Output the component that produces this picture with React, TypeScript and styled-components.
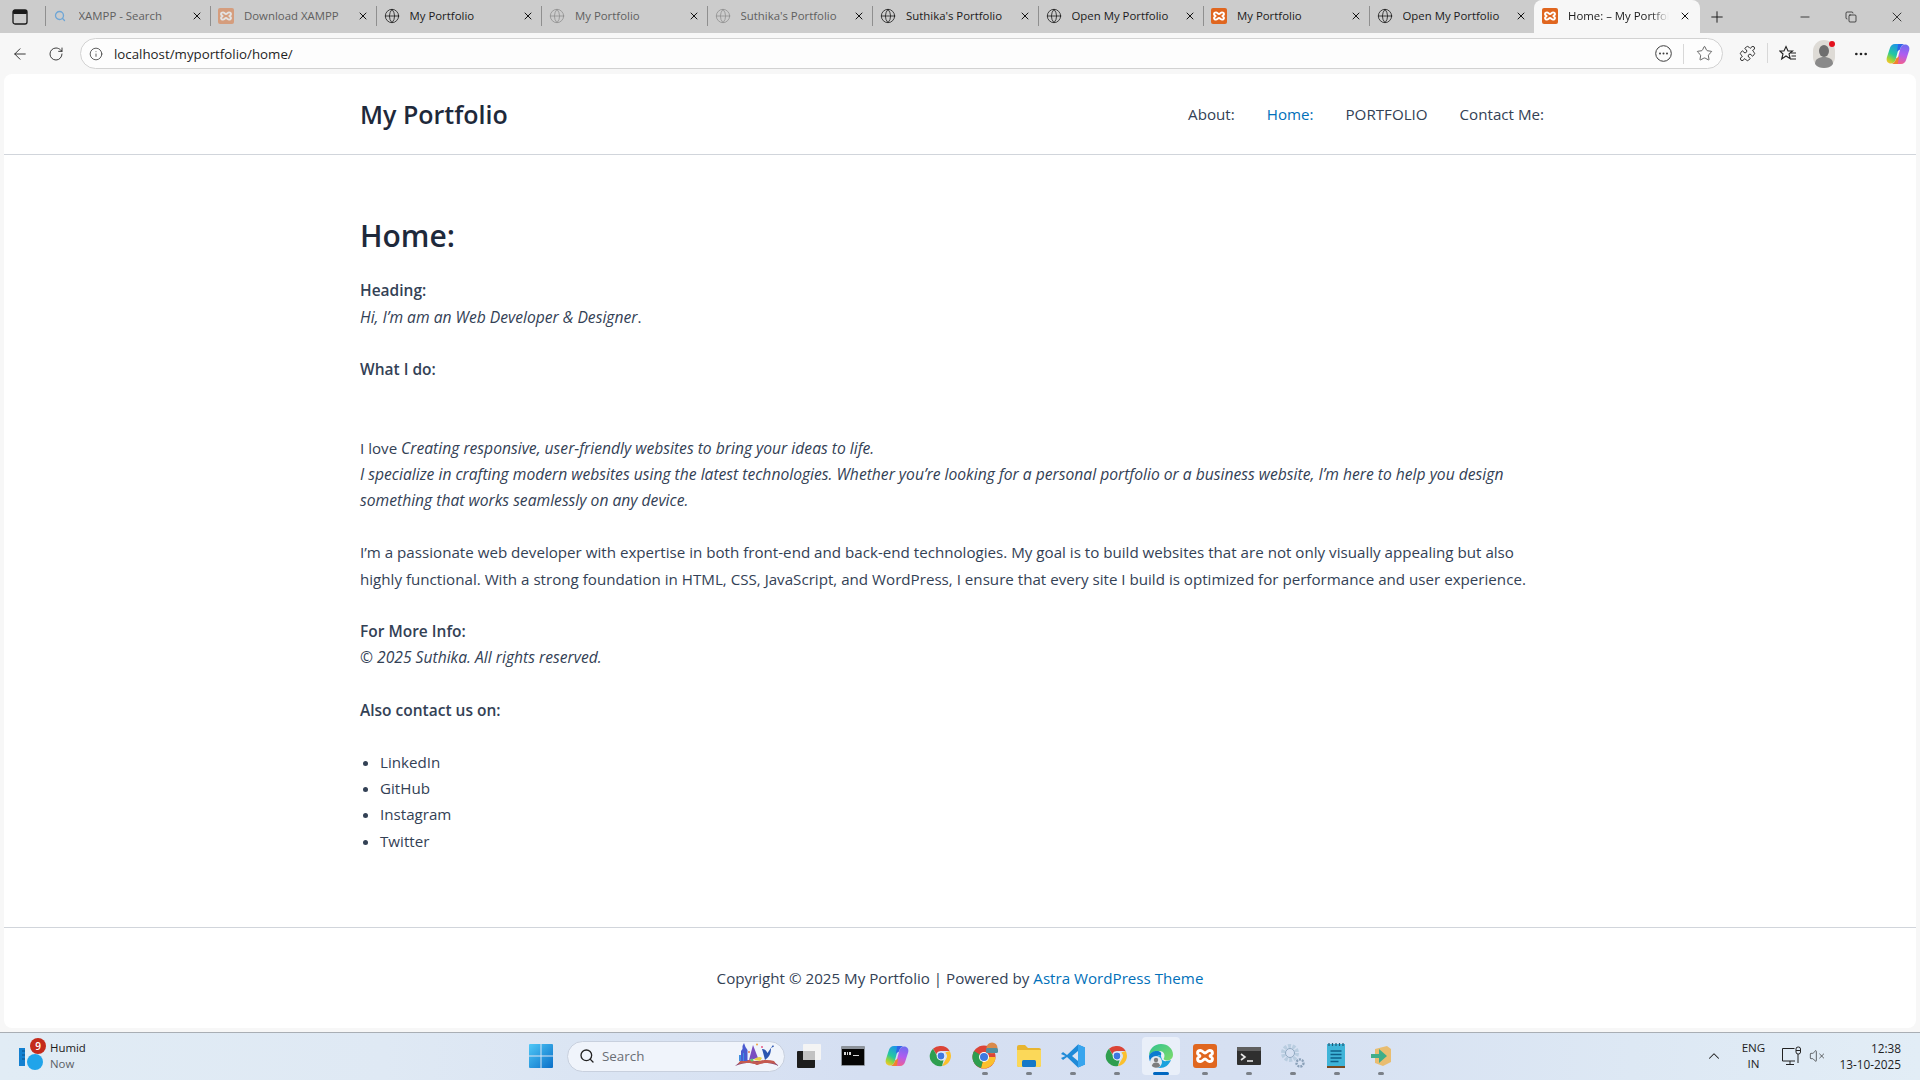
import React from 'react'
import styled, { createGlobalStyle } from 'styled-components'
import {
  ArrowLeft,
  ChevronUp,
  Copy,
  Ellipsis,
  Globe,
  Info,
  Minus,
  Plus,
  Puzzle,
  RotateCw,
  Search,
  Star,
  VolumeX,
  X
} from 'lucide-react'

const UI_FONT = '"Open Sans", "Noto Sans", sans-serif'

const GlobalStyle = createGlobalStyle`
  html, body {
    margin: 0;
    padding: 0;
    width: 1920px;
    height: 1080px;
    overflow: hidden;
    background: #f7f7f7;
    font-family: ${UI_FONT};
  }
  * {
    box-sizing: border-box;
  }
`

const Screen = styled.div`
  width: 1920px;
  height: 1080px;
  display: flex;
  flex-direction: column;
  background: #f7f7f7;
`

const TabStrip = styled.div`
  height: 33px;
  flex: none;
  display: flex;
  background: #cccccc;
`

const PanelButton = styled.div`
  width: 44.5px;
  flex: none;
  display: flex;
  align-items: center;
  justify-content: center;
  padding-right: 4px;
  color: #1a1a1a;
`

const Tab = styled.div<{ $active?: boolean; $dim?: boolean }>`
  width: ${({ $active }) => ($active ? '166px' : '165.5px')};
  flex: none;
  display: flex;
  align-items: center;
  padding: 0 ${({ $active }) => ($active ? '9px' : '7px')} 2px 0;
  gap: 10px;
  font-size: 11.4px;
  white-space: nowrap;
  color: ${({ $dim }) => ($dim ? '#5f5f5f' : '#1b1b1b')};
  background: ${({ $active }) => ($active ? '#f7f7f7' : 'transparent')};
  border-radius: ${({ $active }) => ($active ? '8px 8px 0 0' : '0')};
  &::before {
    content: '';
    flex: none;
    width: 1px;
    height: 20px;
    margin-right: -3px;
    background: ${({ $active }) => ($active ? 'transparent' : '#8f8f8f')};
  }
`

const TabTitle = styled.span<{ $fade?: boolean }>`
  flex: 1;
  overflow: hidden;
  mask-image: ${({ $fade }) => ($fade ? 'linear-gradient(90deg, #000 82%, transparent)' : 'none')};
`

const TabClose = styled.span`
  display: flex;
  width: 12px;
  flex: none;
  color: #111111;
`

const NewTab = styled.div`
  width: 34px;
  flex: none;
  display: flex;
  align-items: center;
  justify-content: center;
  color: #1b1b1b;
`

const WindowControls = styled.div`
  margin-left: auto;
  display: flex;
`

const WindowButton = styled.div`
  width: 46px;
  display: flex;
  align-items: center;
  justify-content: center;
  color: #111111;
`

const Toolbar = styled.div`
  height: 41px;
  flex: none;
  display: flex;
  align-items: flex-start;
  padding: 5px 0 0 2px;
  color: #222222;
`

const ToolButton = styled.div<{ $w?: number }>`
  width: ${({ $w }) => $w ?? 36}px;
  height: 31px;
  flex: none;
  display: flex;
  align-items: center;
  justify-content: center;
`

const AddressBar = styled.div`
  width: 1643px;
  height: 31px;
  margin-left: 6px;
  margin-right: 6px;
  flex: none;
  display: flex;
  align-items: center;
  padding: 0 6px 0 8px;
  background: #fdfdfd;
  border: 1px solid #d2d2d2;
  border-radius: 16px;
`

const Url = styled.span`
  margin-left: 11px;
  flex: 1;
  font-size: 13.3px;
  color: #1f1f1f;
`

const AddressIcon = styled.div`
  width: 24px;
  display: flex;
  justify-content: center;
  color: #3c3c3c;
`

const ToolDivider = styled.div<{ $gap: number }>`
  width: 1px;
  height: 20px;
  margin: 5px ${({ $gap }) => $gap}px 0;
  background: #d8d8d8;
  flex: none;
`

const InlineDivider = styled.div`
  width: 1px;
  height: 20px;
  margin: 0 8px;
  background: #d8d8d8;
  flex: none;
`

const Page = styled.main`
  flex: 1;
  min-height: 0;
  margin: 0 4px 4px;
  display: flex;
  flex-direction: column;
  background: #ffffff;
  border-radius: 8px;
  color: #334155;
  font-size: 15.15px;
  line-height: 26.2px;
`

const SiteHeader = styled.header`
  height: 81px;
  flex: none;
  padding: 0 356px;
  display: flex;
  align-items: center;
  justify-content: space-between;
  border-bottom: 1px solid #d1d5db;
`

const SiteTitle = styled.div`
  font-size: 25px;
  font-weight: 600;
  color: #1e293b;
`

const Nav = styled.nav`
  display: flex;
`

const NavItem = styled.a<{ $current?: boolean }>`
  padding: 0 16px;
  color: ${({ $current }) => ($current ? '#0170b9' : '#334155')};
`

const Content = styled.article`
  padding: 0 356px;
  margin-top: 59px;
`

const PageTitle = styled.h1`
  margin: 0 0 19.4px;
  font-size: 30px;
  line-height: 44px;
  font-weight: 600;
  color: #1e293b;
`

const Paragraph = styled.p`
  margin: 0 0 26.2px;
`

const Strong = styled.strong`
  font-weight: 600;
  font-size: 15.5px;
  line-height: 0;
`

const Em = styled.em`
  font-style: italic;
  font-size: 15.65px;
  line-height: 0;
`

const LinkList = styled.ul`
  margin: 0;
  padding-left: 20px;
`

const SiteFooter = styled.footer`
  margin-top: auto;
  height: 101px;
  flex: none;
  display: flex;
  align-items: center;
  justify-content: center;
  border-top: 1px solid #d1d5db;
`

const FooterLink = styled.a`
  color: #0170b9;
  margin-left: 4px;
`

const Taskbar = styled.div`
  height: 48px;
  flex: none;
  display: grid;
  grid-template-columns: 529px 1fr 230px;
  align-items: center;
  padding-bottom: 1px;
  background: linear-gradient(90deg, #e1ecf5 0%, #dfe9f4 20%, #d5dff2 45%, #d6e0f2 65%, #dde8f4 85%, #e2edf6 100%);
  border-top: 1px solid #a9aeb4;
`

const WeatherWidget = styled.div`
  display: flex;
  align-items: center;
  padding-left: 19px;
  gap: 6px;
`

const WeatherIcon = styled.div`
  position: relative;
  width: 25px;
  height: 30px;
  margin-top: 2px;
`

const Badge = styled.span`
  position: absolute;
  top: -4px;
  left: 11px;
  width: 16px;
  height: 16px;
  border-radius: 50%;
  background: #c42b1c;
  color: #ffffff;
  font-size: 10px;
  line-height: 16px;
  font-weight: 600;
  text-align: center;
`

const WeatherText = styled.div`
  font-size: 11.4px;
  line-height: 16px;
  color: #1a1a1a;
`

const WeatherNow = styled.div`
  color: #5b6066;
`

const TaskCenter = styled.div`
  display: flex;
  align-items: center;
`

const SearchBox = styled.div`
  width: 218px;
  height: 31px;
  margin: 0 2px 0 14px;
  display: flex;
  align-items: center;
  padding: 0 5px 0 11px;
  gap: 7px;
  border-radius: 16px;
  background: #f0f4fb;
  border: 1px solid #c8d0de;
  color: #6a6e75;
  font-size: 13.4px;
`

const SearchLabel = styled.span`
  flex: 1;
`

const TaskIcon = styled.div<{ $active?: boolean; $running?: boolean }>`
  position: relative;
  width: 38px;
  height: 38px;
  margin: 0 3px;
  display: flex;
  align-items: center;
  justify-content: center;
  border-radius: 4px;
  background: ${({ $active }) => ($active ? '#e9eff9' : 'transparent')};
  &::after {
    content: '';
    display: ${({ $running }) => ($running ? 'block' : 'none')};
    position: absolute;
    bottom: 0;
    left: 50%;
    transform: translateX(-50%);
    width: ${({ $active }) => ($active ? '16px' : '6px')};
    height: 3px;
    border-radius: 2px;
    background: ${({ $active }) => ($active ? '#0067c0' : '#7b8088')};
  }
`

const Tray = styled.div`
  display: flex;
  align-items: center;
  color: #1f1f1f;
  padding-right: 19px;
  justify-content: flex-end;
`

const TrayLang = styled.div`
  width: 40px;
  margin: 0 8px 0 10px;
  text-align: center;
  font-size: 11.6px;
  line-height: 16px;
`

const TrayIcons = styled.div`
  display: flex;
  align-items: center;
  gap: 6px;
  margin-right: 14px;
`

const Clock = styled.div`
  text-align: right;
  font-size: 11.8px;
  line-height: 16px;
`

// ---- drawn logos ----

const XamppIcon = ({ size = 16, dim = false }: { size?: number; dim?: boolean }) => (
  <svg width={size} height={size} viewBox="0 0 24 24" style={{ opacity: dim ? 0.45 : 1, flex: 'none' }}>
    <rect width="24" height="24" rx="3" fill="#e0661f" />
    <path
      d="M7.500 6.500c2 0 2.800 2.500 4.500 2.500s2.500-2.500 4.500-2.500c2 0 3 1.300 3 2.800 0 1.800-2.500 1.700-2.500 2.700s2.500.9 2.500 2.700c0 1.500-1 2.800-3 2.800-2 0-2.800-2.500-4.500-2.500s-2.500 2.500-4.500 2.500c-2 0-3-1.300-3-2.800 0-1.800 2.500-1.700 2.500-2.700s-2.500-.9-2.500-2.700c0-1.500 1-2.800 3-2.800z"
      fill="#e0661f"
      stroke="#ffffff"
      strokeWidth="2.800"
      strokeLinejoin="round"
    />
  </svg>
)

const ChromeIcon = () => (
  <svg width="24" height="24" viewBox="0 0 48 48">
    <path d="M24 4a20 20 0 0 1 17.300 10H24a10 10 0 0 0-9.400 6.600L8 9.600A20 20 0 0 1 24 4z" fill="#db4437" />
    <path d="M41.300 14A20 20 0 0 1 26 43.900l8-13.900A10 10 0 0 0 32.700 17z" fill="#fbc02d" />
    <path d="M26 43.900A20 20 0 0 1 8 9.600l8 13.900A10 10 0 0 0 29 32.700z" fill="#2e9e4f" />
    <circle cx="24" cy="24" r="8.600" fill="#fff" />
    <circle cx="24" cy="24" r="6.800" fill="#3f78e0" />
  </svg>
)

const ChromeWithBadge = () => (
  <svg width="28" height="28" viewBox="0 0 28 28">
    <circle cx="13" cy="15" r="11.500" fill="#db4437" />
    <path d="M13 15 24.500 15A11.500 11.500 0 0 1 10 26z" fill="#fbc02d" />
    <path d="M13 15 10 26A11.500 11.500 0 0 1 3 9z" fill="#2e9e4f" />
    <circle cx="13" cy="15" r="5" fill="#fff" />
    <circle cx="13" cy="15" r="4" fill="#3f78e0" />
    <circle cx="21" cy="6" r="5.500" fill="#d98a4b" />
    <rect x="15" y="6" width="12" height="5" rx="1.500" fill="#4f8f9f" />
  </svg>
)

const CopilotIcon = ({ size = 24, id = 'a' }: { size?: number; id?: string }) => (
  <svg width={size} height={size} viewBox="0 0 24 24">
    <defs>
      <linearGradient id={`copilot-l-${id}`} x1="0.7" y1="0" x2="0.2" y2="1">
        <stop offset="0" stopColor="#1c8ff0" />
        <stop offset="0.55" stopColor="#25c8a0" />
        <stop offset="0.8" stopColor="#9ad438" />
        <stop offset="1" stopColor="#f6c62c" />
      </linearGradient>
      <linearGradient id={`copilot-r-${id}`} x1="0.6" y1="0" x2="0.4" y2="1">
        <stop offset="0" stopColor="#6f6cf0" />
        <stop offset="0.5" stopColor="#b05cf0" />
        <stop offset="1" stopColor="#f45f8c" />
      </linearGradient>
    </defs>
    <path
      d="M9 2h7.500c-2 .6-3.200 2.300-3.900 4.600L9.800 17c-.7 2.800-2.200 4.500-4.800 4.500-3.300 0-5-2.500-4.200-5.800L3.600 7C4.500 3.800 6.300 2 9 2z"
      fill={`url(#copilot-l-${id})`}
    />
    <path
      d="M15 22H7.500c2-.6 3.200-2.300 3.900-4.600L14.200 7c.7-2.800 2.200-4.500 4.800-4.500 3.300 0 5 2.500 4.200 5.800L20.400 17c-.9 3.200-2.700 5-5.400 5z"
      fill={`url(#copilot-r-${id})`}
    />
    <path d="M11.500 22H6c2.500-1 3.300-3 4-5.500l3-2-.5 3.500c-.3 1.500-.5 3-1 4z" fill="#f0822f" />
    <path d="M12.500 2H18c-2.500 1-3.300 3-4 5.500l-3 2 .5-3.500c.3-1.500.5-3 1-4z" fill="#2f63e8" />
  </svg>
)

const WindowsLogo = () => (
  <svg width="24" height="24" viewBox="0 0 24 24">
    <defs>
      <linearGradient id="win-logo" x1="0" y1="0" x2="1" y2="1">
        <stop offset="0" stopColor="#4fc8f7" />
        <stop offset="1" stopColor="#0a6fc8" />
      </linearGradient>
    </defs>
    <path d="M0 1a1 1 0 0 1 1-1h10.500v11.500H0zM12.500 0H23a1 1 0 0 1 1 1v10.500H12.500zM0 12.500h11.500V24H1a1 1 0 0 1-1-1zM12.500 12.500H24V23a1 1 0 0 1-1 1H12.500z" fill="url(#win-logo)" />
  </svg>
)

const SearchArt = () => (
  <svg width="44" height="26" viewBox="0 0 44 26">
    <path d="M0 23c6-2.500 11-3 14-3 3 0 6 .6 8 2 2-1.400 5-2 8-2 3 0 8 .5 14 3l-6-5H6z" fill="#8a4a70" />
    <path d="M5 18c5-1.500 12-1.500 17 1 5-2.500 12-2.500 17-1l2 3c-6-1.500-14-1.500-19 1-5-2.500-13-2.500-19-1z" fill="#c45a50" />
    <path d="M6 18V8l1.500-2V3l1.500-3 1.500 4 2 3v11z" fill="#4a5ad0" />
    <path d="M8 18V10h1v8zM4 18v-6h2v6z" fill="#3f8fe0" />
    <path d="M14 17 18 2l5 13z" fill="#7a4ec0" />
    <path d="M19 17c2-3 6-4 8-2l-2 3z" fill="#e8d24a" />
    <path d="M27 6c3 0 4 1.500 5.500 4L38 2l1 1.500L36 5c0 6-2 9-6 12-1-4-2-8-3-11z" fill="#2a55b0" />
    <circle cx="17" cy="17" r="1.500" fill="#5fc870" />
    <circle cx="14" cy="9" r="1" fill="#e87a50" />
    <circle cx="27" cy="4" r="1" fill="#e85a8a" />
    <circle cx="22" cy="1.500" r="1" fill="#f0a040" />
  </svg>
)

const TaskViewIcon = () => (
  <svg width="24" height="24" viewBox="0 0 24 24">
    <rect x="6" y="0" width="18" height="16" rx="1" fill="#f4f4f4" />
    <rect x="0" y="7" width="18" height="17" rx="1" fill="#1d1d1d" />
    <rect x="6" y="7" width="12" height="9" fill="#c2c2c2" />
  </svg>
)

const CmdIcon = () => (
  <svg width="24" height="20" viewBox="0 0 24 20">
    <rect width="24" height="20" rx="1" fill="#8d939b" />
    <rect x="1" y="3" width="22" height="16" fill="#050505" />
    <path d="M3 6h2v3H3zM6 6h1v3H6zM8 6h2v3H8zM12 9h6v1h-6z" fill="#d8d8d8" />
  </svg>
)

const FolderIcon = () => (
  <svg width="24" height="22" viewBox="0 0 24 22">
    <path d="M0 2a2 2 0 0 1 2-2h6l3 3h11a2 2 0 0 1 2 2v15a2 2 0 0 1-2 2H2a2 2 0 0 1-2-2z" fill="#e8b530" />
    <path d="M0 5h24v15a2 2 0 0 1-2 2H2a2 2 0 0 1-2-2z" fill="#fbd859" />
    <rect x="5" y="15" width="14" height="7" rx="1.500" fill="#1478c8" />
  </svg>
)

const VsCodeIcon = () => (
  <svg width="24" height="24" viewBox="0 0 24 24">
    <path d="M17 0.500 24 3.500v17l-7 3L6 13l-4 3-2-2 4.500-2L0 10l2-2 4 3z" fill="#1f8ad8" />
    <path d="M17 0.500 24 3.500v17l-7 3z" fill="#38a5ee" />
    <path d="M17 7l-6 5 6 5z" fill="#dbe4f3" />
  </svg>
)

const EdgeIcon = () => (
  <svg width="26" height="26" viewBox="0 0 26 26">
    <defs>
      <linearGradient id="edge-a" x1="0" y1="0" x2="1" y2="1">
        <stop offset="0" stopColor="#30c38e" />
        <stop offset="1" stopColor="#7fdc6a" />
      </linearGradient>
    </defs>
    <path d="M13 1c7 0 12 5 12 10.500 0 4-3 6-6 6-2 0-4-1-3-2.500 1-2 1-7-5-7C6 8 2 10 1 13 1 6 6 1 13 1z" fill="url(#edge-a)" />
    <path d="M1 13c1-3 4-5 8-5 3 0 5 2 4 4-4 0-7 3-6 8 .5 2 2 4 5 5C5 25 1 20 1 13z" fill="#0c7ccf" />
    <path d="M7 20c-1-5 2-8 6-8 0 3 1 7 6 6 2 0 3-1 4-1-2 5-6 8-11 8-3-1-4.500-3-5-5z" fill="#1aa2dd" />
    <circle cx="8" cy="19" r="6" fill="#e6e9ee" />
    <circle cx="8" cy="17" r="2.200" fill="#7d7d7d" />
    <path d="M3.800 23c.5-2.500 2-3.500 4.200-3.500s3.700 1 4.200 3.500a6 6 0 0 1-8.400 0z" fill="#7d7d7d" />
  </svg>
)

const TerminalIcon = () => (
  <svg width="24" height="18" viewBox="0 0 24 18">
    <rect width="24" height="18" rx="1" fill="#2f2f2f" />
    <rect width="24" height="4" rx="1" fill="#5f5f5f" />
    <path d="M4 7l4 3-4 3" fill="none" stroke="#e8e8e8" strokeWidth="1.600" />
    <path d="M10 14h6" stroke="#e8e8e8" strokeWidth="1.600" />
  </svg>
)

const GearIcon = () => (
  <svg width="26" height="26" viewBox="0 0 26 26">
    <circle cx="10" cy="10" r="7" fill="none" stroke="#b9cde0" strokeWidth="4" strokeDasharray="3 1.400" />
    <circle cx="10" cy="10" r="4.500" fill="none" stroke="#8fa8c0" strokeWidth="1" />
    <circle cx="20" cy="20" r="3.500" fill="none" stroke="#8aa0b8" strokeWidth="2.400" strokeDasharray="2 1" />
  </svg>
)

const NotepadIcon = () => (
  <svg width="20" height="26" viewBox="0 0 20 26">
    <rect x="0" y="1" width="18" height="24" fill="#3fb4d8" />
    <rect x="0" y="23" width="18" height="2" fill="#7a4a20" />
    <path d="M2 0v3M5.500 0v3M9 0v3M12.500 0v3M16 0v3" stroke="#205a78" strokeWidth="1.200" />
    <path d="M3.500 8h11M3.500 11.500h11M3.500 15h11M3.500 18.500h8" stroke="#0e5f88" strokeWidth="1.600" />
  </svg>
)

const InstallerIcon = () => (
  <svg width="22" height="22" viewBox="0 0 22 22">
    <path d="M5 4l12-3 4 3v13l-8 4-8-3z" fill="#e9bd70" />
    <path d="M1 9h8V4l8 7-8 7v-5H1z" fill="#3fae8a" />
  </svg>
)

const WeatherGlyph = () => (
  <svg width="25" height="30" viewBox="0 0 25 30">
    <rect x="0" y="6" width="6" height="18" fill="#1380d0" />
    <path d="M3 9h3M3 13h3M3 17h3" stroke="#0a4f8a" strokeWidth="1" />
    <circle cx="16" cy="20" r="8" fill="#20a4ea" />
  </svg>
)

const Avatar = () => (
  <svg width="24" height="28" viewBox="0 0 24 28">
    <rect width="22" height="28" y="0" rx="11" fill="#dedbd6" />
    <ellipse cx="11" cy="11" rx="5" ry="6" fill="#6e6e6e" />
    <path d="M2 24c0-5 4-7 9-7s9 2 9 7c-2 3-6 4-9 4s-7-1-9-4z" fill="#8a8a8a" />
    <circle cx="19" cy="4" r="3" fill="#e3121e" />
  </svg>
)

const FavoritesIcon = () => (
  <svg width="18" height="18" viewBox="0 0 18 18" fill="none" stroke="#222" strokeWidth="1.100">
    <path d="M7 1.500 9 6h4.500L10 9l1.300 4.800L7 11l-4.300 3L4 9 .8 6H5z" />
    <path d="M12 8h5M12.500 11h4.500M12 14h5" />
  </svg>
)

const PageMenuIcon = () => (
  <svg width="17" height="17" viewBox="0 0 17 17">
    <circle cx="8.500" cy="8.500" r="7.800" fill="none" stroke="#3c3c3c" strokeWidth="1" />
    <circle cx="5" cy="8.500" r="1" fill="#3c3c3c" />
    <circle cx="8.500" cy="8.500" r="1" fill="#3c3c3c" />
    <circle cx="12" cy="8.500" r="1" fill="#3c3c3c" />
  </svg>
)

const MonitorIcon = () => (
  <svg width="22" height="20" viewBox="0 0 22 20" fill="none" stroke="#222" strokeWidth="1">
    <path d="M14 15H1.500V2.500h12" />
    <path d="M5 18.500h8M9 15v3.500" />
    <rect x="15" y="1" width="4.500" height="7" rx="2" />
    <path d="M17 8v9" />
    <path d="M15 4.500h4.500" />
  </svg>
)

const PanelIcon = () => (
  <svg width="16" height="16" viewBox="0 0 16 16">
    <rect x="1" y="1" width="14" height="14" rx="2" fill="none" stroke="#1a1a1a" strokeWidth="1.300" />
    <rect x="1" y="1" width="14" height="4" rx="1" fill="#1a1a1a" />
  </svg>
)

// ---- data ----

type TabData = { title: string; icon: 'search' | 'xampp' | 'globe'; dim?: boolean }

const TABS: TabData[] = [
  { title: 'XAMPP - Search', icon: 'search', dim: true },
  { title: 'Download XAMPP', icon: 'xampp', dim: true },
  { title: 'My Portfolio', icon: 'globe' },
  { title: 'My Portfolio', icon: 'globe', dim: true },
  { title: "Suthika's Portfolio", icon: 'globe', dim: true },
  { title: "Suthika's Portfolio", icon: 'globe' },
  { title: 'Open My Portfolio', icon: 'globe' },
  { title: 'My Portfolio', icon: 'xampp' },
  { title: 'Open My Portfolio', icon: 'globe' }
]

const NAV_ITEMS = ['About:', 'Home:', 'PORTFOLIO', 'Contact Me:']

function TabIcon({ tab }: { tab: TabData }) {
  if (tab.icon === 'search') return <Search size={12} color="#6fa6d6" strokeWidth={2.6} style={{ margin: '0 3px 0 1px', flex: 'none' }} />
  if (tab.icon === 'xampp') return <XamppIcon dim={tab.dim} />
  return <Globe size={16} strokeWidth={1.2} color={tab.dim ? '#8f8f8f' : '#1b1b1b'} style={{ flex: 'none' }} />
}

export default function App() {
  return (
    <Screen>
      <GlobalStyle />
      <TabStrip>
        <PanelButton>
          <PanelIcon />
        </PanelButton>
        {TABS.map((tab, i) => (
          <Tab key={i} $dim={tab.dim}>
            <TabIcon tab={tab} />
            <TabTitle>{tab.title}</TabTitle>
            <TabClose>
              <X size={12} strokeWidth={2} />
            </TabClose>
          </Tab>
        ))}
        <Tab $active>
          <XamppIcon />
          <TabTitle $fade>Home: – My Portfolio</TabTitle>
          <TabClose>
            <X size={12} strokeWidth={2} />
          </TabClose>
        </Tab>
        <NewTab>
          <Plus size={18} strokeWidth={1.3} />
        </NewTab>
        <WindowControls>
          <WindowButton>
            <Minus size={14} strokeWidth={1.3} />
          </WindowButton>
          <WindowButton>
            <Copy size={12} strokeWidth={1.4} />
          </WindowButton>
          <WindowButton>
            <X size={16} strokeWidth={1.2} />
          </WindowButton>
        </WindowControls>
      </TabStrip>

      <Toolbar>
        <ToolButton>
          <ArrowLeft size={18} strokeWidth={1.2} />
        </ToolButton>
        <ToolButton>
          <RotateCw size={16} strokeWidth={1.3} />
        </ToolButton>
        <AddressBar>
          <Info size={14} strokeWidth={1.4} color="#3c3c3c" />
          <Url>localhost/myportfolio/home/</Url>
          <AddressIcon>
            <PageMenuIcon />
          </AddressIcon>
          <InlineDivider />
          <AddressIcon>
            <Star size={17} strokeWidth={1.1} />
          </AddressIcon>
        </AddressBar>
        <ToolButton>
          <Puzzle size={17} strokeWidth={1.3} />
        </ToolButton>
        <ToolDivider $gap={2} />
        <ToolButton>
          <FavoritesIcon />
        </ToolButton>
        <ToolButton $w={38}>
          <Avatar />
        </ToolButton>
        <ToolButton $w={34}>
          <Ellipsis size={16} />
        </ToolButton>
        <ToolButton $w={40}>
          <CopilotIcon size={24} id="toolbar" />
        </ToolButton>
      </Toolbar>

      <Page>
        <SiteHeader>
          <SiteTitle>My Portfolio</SiteTitle>
          <Nav>
            {NAV_ITEMS.map(item => (
              <NavItem key={item} $current={item === 'Home:'}>
                {item}
              </NavItem>
            ))}
          </Nav>
        </SiteHeader>

        <Content>
          <PageTitle>Home:</PageTitle>
          <Paragraph>
            <Strong>Heading:</Strong>
            <br />
            <Em>Hi, I’m am an Web Developer &amp; Designer</Em>.
          </Paragraph>
          <Paragraph>
            <Strong>What I do:</Strong>
            <br />
            <br />
          </Paragraph>
          <Paragraph>
            I love <Em>Creating responsive, user-friendly websites to bring your ideas to life.</Em>
            <br />
            <Em>
              I specialize in crafting modern websites using the latest technologies. Whether you’re looking for a
              personal portfolio or a business website, I’m here to help you design
              <br />
              something that works seamlessly on any device.
            </Em>
          </Paragraph>
          <Paragraph>
            I’m a passionate web developer with expertise in both front-end and back-end technologies. My goal is to
            build websites that are not only visually appealing but also
            <br />
            highly functional. With a strong foundation in HTML, CSS, JavaScript, and WordPress, I ensure that every
            site I build is optimized for performance and user experience.
          </Paragraph>
          <Paragraph>
            <Strong>For More Info:</Strong>
            <br />
            <Em>© 2025 Suthika. All rights reserved.</Em>
          </Paragraph>
          <Paragraph>
            <Strong>Also contact us on:</Strong>
          </Paragraph>
          <LinkList>
            <li>LinkedIn</li>
            <li>GitHub</li>
            <li>Instagram</li>
            <li>Twitter</li>
          </LinkList>
        </Content>

        <SiteFooter>
          Copyright © 2025 My Portfolio | Powered by <FooterLink>Astra WordPress Theme</FooterLink>
        </SiteFooter>
      </Page>

      <Taskbar>
        <WeatherWidget>
          <WeatherIcon>
            <WeatherGlyph />
            <Badge>9</Badge>
          </WeatherIcon>
          <WeatherText>
            Humid
            <WeatherNow>Now</WeatherNow>
          </WeatherText>
        </WeatherWidget>

        <TaskCenter>
          <WindowsLogo />
          <SearchBox>
            <Search size={16} strokeWidth={2} color="#222" />
            <SearchLabel>Search</SearchLabel>
            <SearchArt />
          </SearchBox>
          <TaskIcon>
            <TaskViewIcon />
          </TaskIcon>
          <TaskIcon>
            <CmdIcon />
          </TaskIcon>
          <TaskIcon>
            <CopilotIcon id="taskbar" />
          </TaskIcon>
          <TaskIcon>
            <ChromeIcon />
          </TaskIcon>
          <TaskIcon $running>
            <ChromeWithBadge />
          </TaskIcon>
          <TaskIcon $running>
            <FolderIcon />
          </TaskIcon>
          <TaskIcon $running>
            <VsCodeIcon />
          </TaskIcon>
          <TaskIcon $running>
            <ChromeIcon />
          </TaskIcon>
          <TaskIcon $running $active>
            <EdgeIcon />
          </TaskIcon>
          <TaskIcon $running>
            <XamppIcon size={24} />
          </TaskIcon>
          <TaskIcon $running>
            <TerminalIcon />
          </TaskIcon>
          <TaskIcon $running>
            <GearIcon />
          </TaskIcon>
          <TaskIcon $running>
            <NotepadIcon />
          </TaskIcon>
          <TaskIcon $running>
            <InstallerIcon />
          </TaskIcon>
        </TaskCenter>

        <Tray>
          <ChevronUp size={18} strokeWidth={1.4} />
          <TrayLang>
            ENG
            <br />
            IN
          </TrayLang>
          <TrayIcons>
            <MonitorIcon />
            <VolumeX size={16} strokeWidth={1} />
          </TrayIcons>
          <Clock>
            12:38
            <br />
            13-10-2025
          </Clock>
        </Tray>
      </Taskbar>
    </Screen>
  )
}
